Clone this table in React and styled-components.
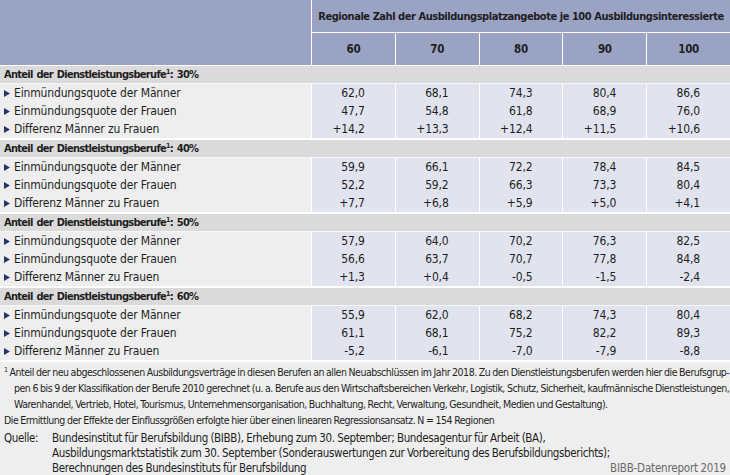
import React from "react";
import styled, { createGlobalStyle } from "styled-components";

const GlobalStyle = createGlobalStyle`
  html, body {
    margin: 0;
    padding: 0;
    background: #eeeeee;
  }
  body {
    font-family: "DejaVu Sans Condensed", "Liberation Sans", sans-serif;
    color: #1e1e1e;
    letter-spacing: -0.15px;
  }
`;

const Page = styled.div`
  width: 730px;
  height: 475px;
  background: #eeeeee;
  overflow: hidden;
`;

const Head = styled.div`
  display: grid;
  grid-template-columns: 311px repeat(5, 1fr);
  grid-template-rows: 32px 32px;
  gap: 1px;
  background: #ffffff;
  border-bottom: 1px solid #ffffff;
`;

const HeadBlank = styled.div`
  grid-row: 1 / span 2;
  background: #9aa3c4;
`;

const HeadTitle = styled.div`
  grid-column: 2 / span 5;
  background: #9aa3c4;
  display: flex;
  align-items: center;
  justify-content: center;
  font-weight: bold;
  font-size: 11px;
  letter-spacing: -0.45px;
  white-space: nowrap;
`;

const HeadCell = styled.div`
  background: #9aa3c4;
  display: flex;
  align-items: center;
  justify-content: center;
  font-weight: bold;
  font-size: 11.5px;
  letter-spacing: -0.3px;
`;

const Section = styled.div`
  border-bottom: 2px solid #ffffff;
`;

const SectionTitle = styled.div`
  height: 17px;
  line-height: 17px;
  padding-left: 4px;
  background: #dadada;
  font-weight: bold;
  font-size: 11px;
  letter-spacing: -0.7px;
  word-spacing: 1px;
  border-bottom: 1px solid #f6f6f6;
`;

const Sup = styled.sup`
  font-size: 7px;
  vertical-align: 4px;
  line-height: 0;
`;

const Block = styled.div`
  display: grid;
  grid-template-columns: 311px repeat(5, 1fr);
  column-gap: 1px;
  background: #ffffff;
`;

const LabelCol = styled.div`
  background: #eeeeee;
`;

const ValueCol = styled.div`
  background: #e1e4ef;
  padding-right: 30px;
`;

const Line = styled.div`
  height: 18px;
  font-size: 12px;
  display: flex;
  align-items: center;
  justify-content: ${(p) => (p.right ? "flex-end" : "flex-start")};
  padding-left: ${(p) => (p.right ? "0" : "4px")};
  gap: 4px;
`;

const Notes = styled.div`
  padding: 2px 4px 0 4px;
  font-size: 10.5px;
  letter-spacing: -0.5px;
  word-spacing: -0.4px;
  line-height: 16px;
  white-space: nowrap;
`;

const NoteLine = styled.div`
  padding-left: ${(p) => (p.indent ? "10px" : "0")};
`;

const Source = styled.div`
  display: grid;
  grid-template-columns: 48px 1fr;
  margin-top: 3px;
  line-height: 15px;
  font-size: 11.5px;
  letter-spacing: -0.35px;
`;

const SourceLast = styled.div`
  display: flex;
  justify-content: space-between;
`;

const Credit = styled.span`
  color: #6a6a6a;
  letter-spacing: -0.2px;
`;

const Arrow = () => (
  <svg width="6" height="7" viewBox="0 0 6 7">
    <path d="M0 0 L6 3.5 L0 7 Z" fill="#27356a" />
  </svg>
);

const rowLabels = [
  "Einmündungsquote der Männer",
  "Einmündungsquote der Frauen",
  "Differenz Männer zu Frauen",
];

const sections = [
  {
    share: "30%",
    values: [
      ["62,0", "47,7", "+14,2"],
      ["68,1", "54,8", "+13,3"],
      ["74,3", "61,8", "+12,4"],
      ["80,4", "68,9", "+11,5"],
      ["86,6", "76,0", "+10,6"],
    ],
  },
  {
    share: "40%",
    values: [
      ["59,9", "52,2", "+7,7"],
      ["66,1", "59,2", "+6,8"],
      ["72,2", "66,3", "+5,9"],
      ["78,4", "73,3", "+5,0"],
      ["84,5", "80,4", "+4,1"],
    ],
  },
  {
    share: "50%",
    values: [
      ["57,9", "56,6", "+1,3"],
      ["64,0", "63,7", "+0,4"],
      ["70,2", "70,7", "-0,5"],
      ["76,3", "77,8", "-1,5"],
      ["82,5", "84,8", "-2,4"],
    ],
  },
  {
    share: "60%",
    values: [
      ["55,9", "61,1", "-5,2"],
      ["62,0", "68,1", "-6,1"],
      ["68,2", "75,2", "-7,0"],
      ["74,3", "82,2", "-7,9"],
      ["80,4", "89,3", "-8,8"],
    ],
  },
];

const columns = ["60", "70", "80", "90", "100"];

export default function App() {
  return (
    <Page>
      <GlobalStyle />
      <Head>
        <HeadBlank />
        <HeadTitle>
          Regionale Zahl der Ausbildungsplatzangebote je 100 Ausbildungsinteressierte
        </HeadTitle>
        {columns.map((c) => (
          <HeadCell key={c}>{c}</HeadCell>
        ))}
      </Head>

      {sections.map((s) => (
        <Section key={s.share}>
          <SectionTitle>
            Anteil der Dienstleistungsberufe<Sup>1</Sup>: {s.share}
          </SectionTitle>
          <Block>
            <LabelCol>
              {rowLabels.map((l) => (
                <Line key={l}>
                  <Arrow />
                  {l}
                </Line>
              ))}
            </LabelCol>
            {s.values.map((col, i) => (
              <ValueCol key={i}>
                {col.map((v, j) => (
                  <Line right key={j}>
                    {v}
                  </Line>
                ))}
              </ValueCol>
            ))}
          </Block>
        </Section>
      ))}

      <Notes>
        <NoteLine>
          <Sup>1</Sup> Anteil der neu abgeschlossenen Ausbildungsverträge in diesen Berufen an allen
          Neuabschlüssen im Jahr 2018. Zu den Dienstleistungsberufen werden hier die Berufsgrup-
        </NoteLine>
        <NoteLine indent>
          pen 6 bis 9 der Klassifikation der Berufe 2010 gerechnet (u. a. Berufe aus den
          Wirtschaftsbereichen Verkehr, Logistik, Schutz, Sicherheit, kaufmännische Dienstleistungen,
        </NoteLine>
        <NoteLine indent>
          Warenhandel, Vertrieb, Hotel, Tourismus, Unternehmensorganisation, Buchhaltung, Recht,
          Verwaltung, Gesundheit, Medien und Gestaltung).
        </NoteLine>
        <NoteLine>
          Die Ermittlung der Effekte der Einflussgrößen erfolgte hier über einen linearen
          Regressionsansatz. N = 154 Regionen
        </NoteLine>
        <Source>
          <span>Quelle:</span>
          <div>
            <div>
              Bundesinstitut für Berufsbildung (BIBB), Erhebung zum 30. September; Bundesagentur
              für Arbeit (BA),
            </div>
            <div>
              Ausbildungsmarktstatistik zum 30. September (Sonderauswertungen zur Vorbereitung des
              Berufsbildungsberichts);
            </div>
            <SourceLast>
              <span>Berechnungen des Bundesinstituts für Berufsbildung</span>
              <Credit>BIBB-Datenreport 2019</Credit>
            </SourceLast>
          </div>
        </Source>
      </Notes>
    </Page>
  );
}
